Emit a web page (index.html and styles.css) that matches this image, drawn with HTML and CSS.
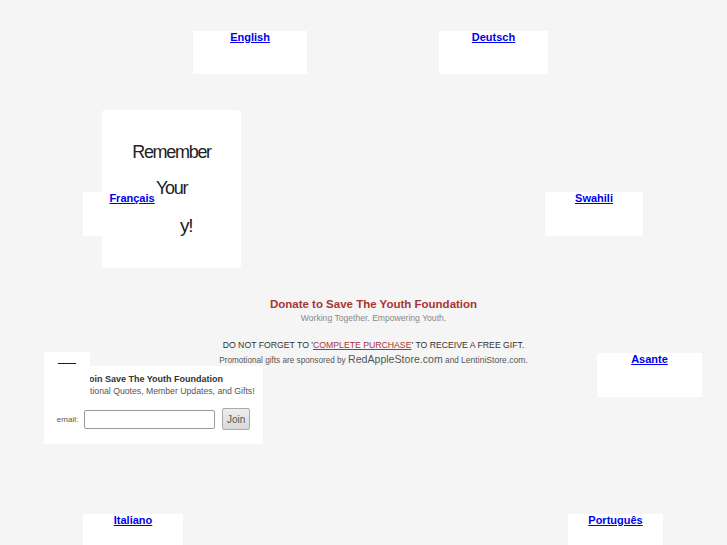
FILE: index.html
```html
<!DOCTYPE html>
<html>
<head>
<meta charset="utf-8">
<title>Save The Youth Foundation</title>
<link rel="stylesheet" href="styles.css">
</head>
<body>
<div class="stage">
  <div class="lang lang-en"><a href="#">English</a></div>
  <div class="lang lang-de"><a href="#">Deutsch</a></div>
  <div class="lang lang-fr"><a href="#">Français</a></div>
  <div class="lang lang-sw"><a href="#">Swahili</a></div>
  <div class="lang lang-xx"><a href="#">&nbsp;&nbsp;&nbsp;&nbsp;&nbsp;&nbsp;</a></div>
  <div class="lang lang-as"><a href="#">Asante</a></div>
  <div class="lang lang-it"><a href="#">Italiano</a></div>
  <div class="lang lang-pt"><a href="#">Português</a></div>

  <div class="remember">
    <div class="r-line">Remember</div>
    <div class="r-line r-your">Your</div>
    <div class="r-line r-end">y!</div>
  </div>

  <div class="center">
    <div class="title">Donate to Save The Youth Foundation</div>
    <div class="tagline">Working Together. Empowering Youth.</div>
    <div class="notice">DO NOT FORGET TO '<a href="#">COMPLETE PURCHASE</a>' TO RECEIVE A FREE GIFT.</div>
    <div class="sponsor">Promotional gifts are sponsored by <span class="big">RedAppleStore.com</span> and <span class="mid">LentiniStore.com</span>.</div>
  </div>

  <div class="join">
    <div class="join-title">Join Save The Youth Foundation</div>
    <div class="join-sub">Promotional Quotes, Member Updates, and Gifts!</div>
    <div class="join-form">
      <label class="join-label">email:</label>
      <input class="join-input" type="text">
      <button class="join-btn">Join</button>
    </div>
  </div>
</div>
</body>
</html>
```

FILE: styles.css
```css
html, body {
  margin: 0;
  padding: 0;
  background: #f5f5f5;
  font-family: "Liberation Sans", Arial, sans-serif;
}
.stage {
  position: relative;
  width: 727px;
  height: 545px;
  overflow: hidden;
}
.lang {
  position: absolute;
  background: #fff;
  text-align: center;
  height: 44px;
}
.lang a {
  position: relative;
  z-index: 3;
  display: block;
  font-size: 11px;
  font-weight: bold;
  line-height: 13px;
  color: #0000ee;
  text-decoration: underline;
}
.lang-en { left: 193px; top: 31px; width: 114px; height: 43px; }
.lang-de { left: 439px; top: 31px; width: 109px; height: 43px; }
.lang-fr { left: 83px; top: 192px; width: 98px; }
.lang-sw { left: 545px; top: 192px; width: 98px; }
.lang-xx { left: 44px; top: 352px; width: 46px; z-index: 3; }
.lang-as { left: 597px; top: 353px; width: 105px; }
.lang-it { left: 83px; top: 514px; width: 100px; border-radius: 2px; }
.lang-pt { left: 568px; top: 514px; width: 95px; border-radius: 2px; }

.remember {
  position: absolute;
  left: 102px;
  top: 110px;
  width: 139px;
  height: 158px;
  background: #fff;
  border-radius: 3px;
  z-index: 2;
  padding-top: 32px;
  box-sizing: border-box;
  text-align: center;
  color: #222;
}
.r-line {
  font-size: 18px;
  line-height: 20px;
  letter-spacing: -1.3px;
}
.r-your {
  margin-top: 16px;
}
.r-end {
  margin-top: 18px;
  text-align: left;
  padding-left: 78px;
  font-size: 19px;
}

.center {
  padding: 297px 0 0 20px;
  text-align: center;
}
.title {
  font-size: 11.5px;
  font-weight: bold;
  line-height: 14px;
  color: #a83434;
}
.tagline {
  font-size: 8.6px;
  line-height: 14px;
  color: #888;
}
.notice {
  margin-top: 13px;
  font-size: 8.7px;
  line-height: 14px;
  color: #333;
}
.notice a {
  color: #a83434;
  text-decoration: underline;
}
.sponsor {
  font-size: 8.2px;
  line-height: 14px;
  color: #555;
}
.sponsor .big { font-size: 10.6px; }
.sponsor .mid { font-size: 8.6px; }

.join {
  position: absolute;
  left: 44px;
  top: 366px;
  width: 219px;
  height: 78px;
  background: #fff;
  z-index: 2;
  text-align: center;
  box-sizing: border-box;
  padding-top: 7px;
}
.join-title {
  font-size: 9px;
  font-weight: bold;
  line-height: 12px;
  color: #333;
}
.join-sub {
  font-size: 8.7px;
  line-height: 12px;
  color: #555;
  padding-left: 12px;
}
.join-form {
  margin-top: 11px;
  display: flex;
  justify-content: center;
  align-items: center;
  gap: 6px;
}
.join-label {
  font-size: 8px;
  color: #555;
}
.join-input {
  width: 131px;
  height: 19px;
  box-sizing: border-box;
  border: 1px solid #999;
  border-radius: 2px;
  margin: 0 1px 0 0;
  padding: 0;
  background: #fff;
}
.join-btn {
  width: 28px;
  height: 22px;
  box-sizing: border-box;
  border: 1px solid #aaa;
  border-radius: 2px;
  background: linear-gradient(#eee, #d8d8d8);
  color: #555;
  font-family: "Liberation Sans", Arial, sans-serif;
  font-size: 10px;
  padding: 0;
}
```
